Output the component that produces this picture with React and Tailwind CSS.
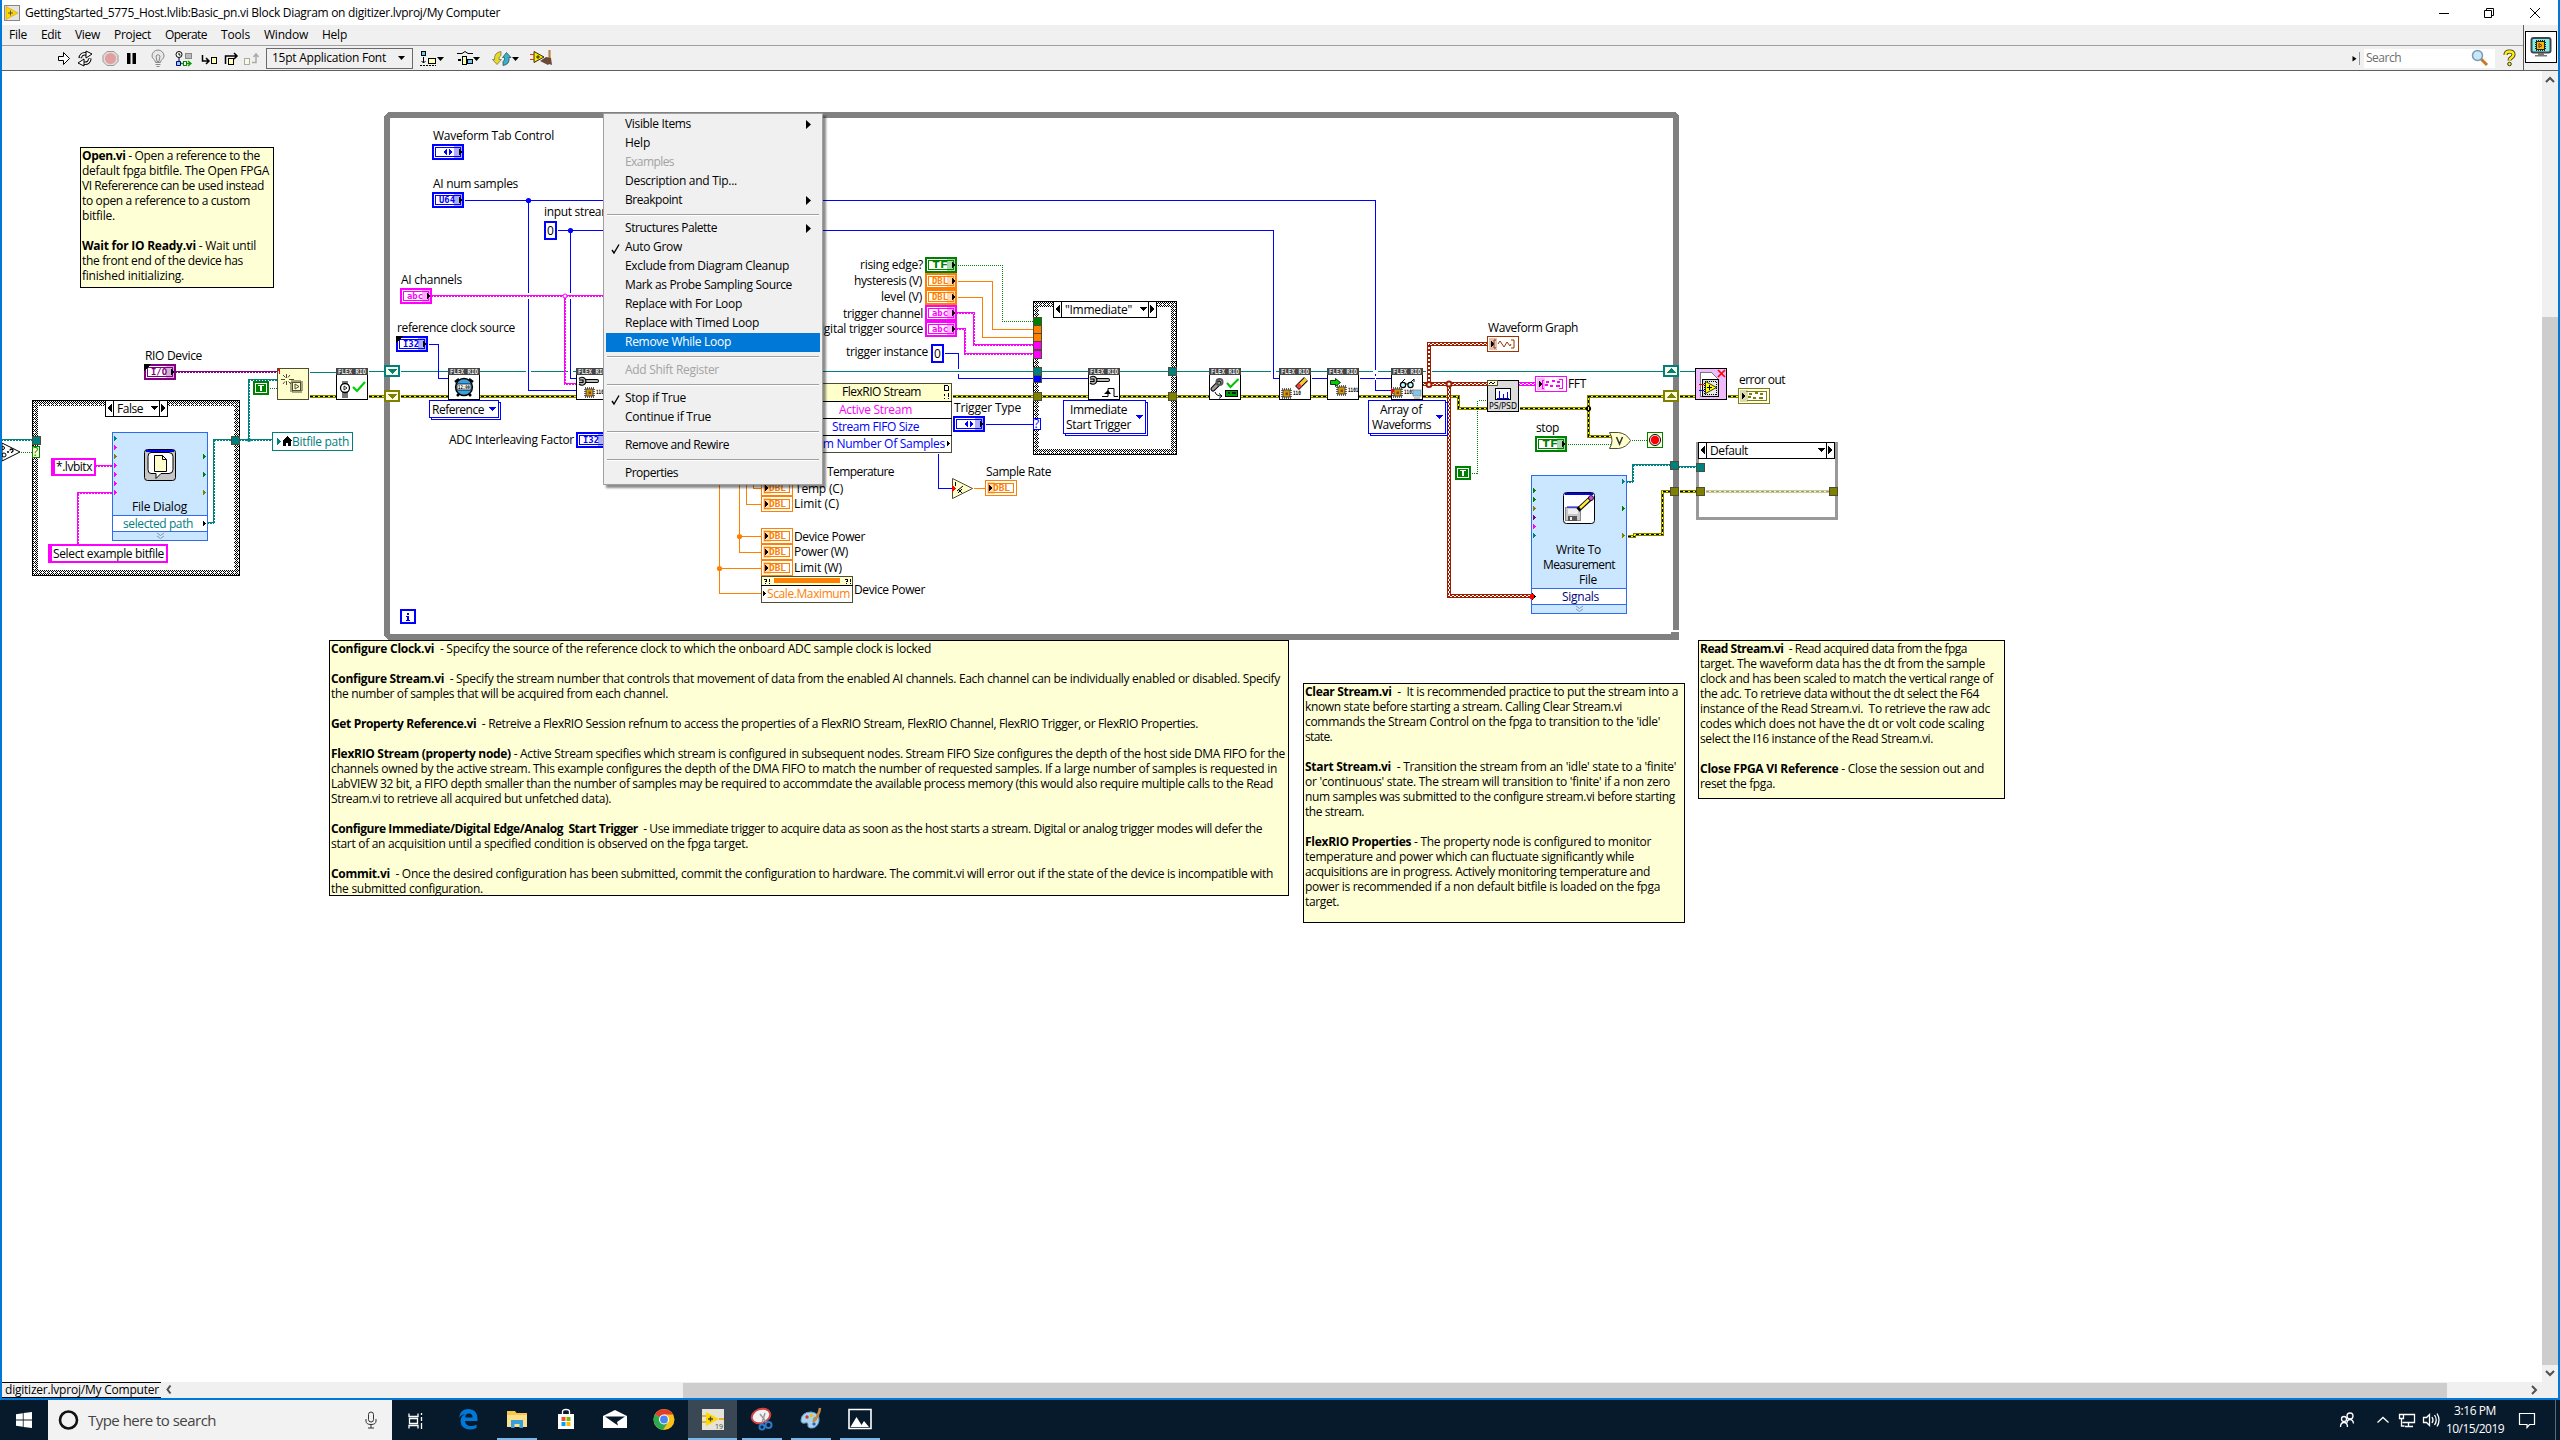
import React, { useLayoutEffect, useRef } from "react";

/* ---------- text helpers ---------- */

// Tracks the letters so that the run of text spans exactly `w` pixels.
function Fit({ w, className = "", children }) {
  const ref = useRef(null);
  useLayoutEffect(() => {
    const el = ref.current;
    el.style.letterSpacing = "0px";
    const natural = el.getBoundingClientRect().width;
    const n = el.textContent.length || 1;
    el.style.letterSpacing = (w - natural) / n + "px";
  }, [w]);
  return (
    <span ref={ref} className={"inline-block whitespace-pre " + className}>
      {children}
    </span>
  );
}

// Diagram label: x = left edge, y = baseline, w = width.
function Label({ x, y, w, c = "text-black", children }) {
  return (
    <div className={"absolute h-4 leading-4 " + c} style={{ left: x, top: y - 12 }}>
      <Fit w={w}>{children}</Fit>
    </div>
  );
}

/* ---------- wires ---------- */

const BLUE = "#0000ff";
const PINK = "#ff00ff";
const TEAL = "#008080";
const ORANGE = "#ff8000";
const GREEN = "#008000";
const OLIVE = "#808000";
const BROWN = "#9c1c00";
const PURPLE = "#800080";

function Wire({ p, c }) {
  return <polyline points={p} fill="none" stroke={c} strokeWidth="1" transform="translate(.5 .5)" />;
}
function Dotted({ p }) {
  return <polyline points={p} fill="none" stroke={GREEN} strokeWidth="1" strokeDasharray="1 1" transform="translate(.5 .5)" />;
}
function Wavy({ p, c }) {
  return (
    <g fill="none">
      <polyline points={p} stroke={c} strokeWidth="2" />
      <polyline points={p} stroke="#fff" strokeWidth="1" strokeDasharray="1 2" transform="translate(.5 .5)" />
    </g>
  );
}
function ErrWire({ p, o = 1 }) {
  return (
    <g fill="none" transform="translate(.5 .5)" opacity={o}>
      <polyline points={p} stroke={OLIVE} strokeWidth="3" />
      <polyline points={p} stroke="#ffff00" strokeWidth="1" />
      <polyline points={p} stroke="#000" strokeWidth="1" strokeDasharray="3 2" />
    </g>
  );
}
function Braid({ p, c = BROWN }) {
  return (
    <g fill="none">
      <polyline points={p} stroke={c} strokeWidth="4" />
      <polyline points={p} stroke="#fff" strokeWidth="1" strokeDasharray="2 2" transform="translate(.5 .5)" />
      <polyline points={p} stroke="#fff" strokeWidth="1" strokeDasharray="2 2" strokeDashoffset="1" transform="translate(-.5 -.5)" />
    </g>
  );
}
function Dot({ x, y, c }) {
  return <circle cx={x + 0.5} cy={y + 0.5} r="2.6" fill={c} shapeRendering="auto" />;
}
function Tri({ x, y, c = "#000" }) {
  return <path d={`M${x} ${y - 3.5}v7l3-3.5z`} fill={c} />;
}

/* ---------- terminals and nodes ---------- */

function Tiny({ x, y, w, c = "#000", s = 7, children }) {
  return (
    <text x={x} y={y} textLength={w} lengthAdjust="spacingAndGlyphs" fontSize={s} fontWeight="bold" fill={c} fontFamily="'DejaVu Sans Mono', monospace">
      {children}
    </text>
  );
}

function Control({ x, y, c, t, corner }) {
  return (
    <g>
      <rect x={x + 1} y={y + 1} width="30" height="14" fill="#fff" stroke={c} strokeWidth="2" />
      <rect x={x + 3.5} y={y + 3.5} width="25" height="9" fill="#fff" stroke={c} />
      {t === "ring" ? (
        <path d={`M${x + 15} ${y + 5}v6l-4-3zM${x + 17} ${y + 5}v6l4-3z`} fill={c} />
      ) : (
        <Tiny x={x + 7} y={y + 11} w={16} c={c} s={8}>{t}</Tiny>
      )}
      <rect x={x + 22} y={y + 2} width="8" height="12" fill={c} opacity=".32" />
      <Tri x={x + 27} y={y + 8} />
      {corner && <path d={`M${x} ${y}h7l-7 7z`} fill="#000" />}
    </g>
  );
}

function Indicator({ x, y, c, t }) {
  return (
    <g>
      <rect x={x + 0.5} y={y + 0.5} width="31" height="15" fill="#fff" stroke={c} />
      {t === "DBL" && <rect x={x + 3.5} y={y + 3.5} width="25" height="9" fill="#fff" stroke={c} />}
      <rect x={x + 2} y={y + 2} width="8" height="12" fill={c} opacity=".3" />
      <Tri x={x + 4} y={y + 8} />
      {t === "DBL" && <Tiny x={x + 8} y={y + 11} w={17} c={c} s={8}>DBL</Tiny>}
      {t === "wave" && <path d={`M${x + 9} ${y + 4}h-2v8h2M${x + 24} ${y + 4}h3v8h-3M${x + 11} ${y + 8}l2-3 4 6 3-5 3 4 1-2`} fill="none" stroke={c} shapeRendering="auto" />}
      {(t === "array" || t === "cluster") && (
        <g>
          {t === "array" && <path d={`M${x + 9} ${y + 4}h-2v8h2M${x + 24} ${y + 3}h3v9h-3`} fill="none" stroke={c} />}
          {t === "cluster" && <path d={`M${x + 8} ${y + 3.5}h20.500v9h-20`} fill="none" stroke={c} />}
          <path d={`M${x + 11} ${y + 5.5}h3M${x + 17} ${y + 5}h3M${x + 10} ${y + 9}h3M${x + 15} ${y + 10}h3M${x + 21} ${y + 10}h4M${x + 22} ${y + 6}h3`} stroke={c} strokeWidth="2" />
        </g>
      )}
    </g>
  );
}

function NumConst({ x, y }) {
  return <rect x={x + 1} y={y + 1} width="11" height="17" fill="#fff" stroke={BLUE} strokeWidth="2" />;
}

function TrueConst({ x, y }) {
  return (
    <g>
      <rect x={x + 1} y={y + 1} width="14" height="12" fill="#fff" stroke={GREEN} strokeWidth="2" />
      <rect x={x + 3} y={y + 3} width="10" height="8" fill={GREEN} />
      <path d={`M${x + 5} ${y + 4.5}h6M${x + 8} ${y + 4}v6`} stroke="#fff" strokeWidth="1.500" />
    </g>
  );
}

function Tunnel({ x, y, c, h = 9 }) {
  return <rect x={x + 0.5} y={y + 0.5} width="8" height={h - 1} fill={c} stroke="#4d4d33" />;
}

function CaseFrame({ x, y, w, h }) {
  return (
    <g>
      <rect x={x} y={y} width={w} height={h} fill="url(#mesh)" />
      <rect x={x + 0.5} y={y + 0.5} width={w - 1} height={h - 1} fill="none" stroke="#000" />
      <rect x={x + 6} y={y + 6} width={w - 12} height={h - 12} fill="#fff" />
    </g>
  );
}

function Selector({ x, y, w }) {
  return (
    <g>
      <rect x={x + 0.5} y={y + 0.5} width={w - 1} height="16" fill="#fff" stroke="#000" />
      <path d={`M${x + 8.5} ${y}v17M${x + w - 8.5} ${y}v17`} stroke="#000" />
      <path d={`M${x + 7} ${y + 4}v8l-5-4zM${x + w - 7} ${y + 4}v8l5-4zM${x + w - 18} ${y + 6}h8l-4 4z`} fill="#000" />
    </g>
  );
}

function PolySelector({ x, y, w, h }) {
  return (
    <g>
      <rect x={x + 2.5} y={y + 2.5} width={w - 1} height={h - 1} fill="#fff" stroke={BLUE} />
      <rect x={x + 0.5} y={y + 0.5} width={w - 1} height={h - 1} fill="#fff" stroke={BLUE} />
      <path d={`M${x + w - 11} ${y + h / 2 - 2}h8l-4 4z`} fill={BLUE} />
    </g>
  );
}

function FlexNode({ x, children }) {
  return (
    <g>
      <rect x={x + 0.5} y="368.5" width="31" height="31" fill="#fff" stroke="#000" />
      <rect x={x} y="368" width="32" height="7" fill="#454545" />
      <Tiny x={x + 2} y={374} w={28} c="#e8e8e8" s={7}>FLEX RIO</Tiny>
      <g transform={`translate(${x} 368)`} shapeRendering="auto">{children}</g>
    </g>
  );
}

function Chip({ x, y, label = "110" }) {
  return (
    <g>
      <rect x={x} y={y} width="9" height="9" fill="none" stroke="#333" strokeWidth="1.500" strokeDasharray="1 1" />
      <rect x={x + 1} y={y + 1} width="7" height="7" fill="#d8960c" stroke="#333" strokeWidth=".8" />
      <rect x={x + 3.5} y={y + 3.5} width="2.500" height="2.500" fill="#7a4a00" />
      <Tiny x={x + 11} y={y + 6} w={label.length * 2.6} s={6}>{label}</Tiny>
    </g>
  );
}

function Wrench({ x, y }) {
  return (
    <g>
      <path d={`M${x + 6} ${y + 4}h12`} stroke="#000" strokeWidth="4" strokeLinecap="round" />
      <path d={`M${x + 6} ${y + 4}h12`} stroke="#bbb" strokeWidth="2" strokeLinecap="round" />
      <path d={`M${x} ${y + 1.5}a4 4 0 1 1 0 5.500M${x} ${y + 3}h4v2.500h-4`} fill="#bbb" stroke="#000" strokeWidth="1.200" />
    </g>
  );
}

function ShiftReg({ x, y, c, up }) {
  return (
    <g>
      <rect x={x + 1} y={y + 1} width="14" height="10" fill="#fffde0" stroke={c} strokeWidth="2" />
      <path d={up ? `M${x + 3} ${y + 8}h10l-5-5z` : `M${x + 3} ${y + 4}h10l-5 5z`} fill={c} />
    </g>
  );
}

function Express({ x, y, w, h, line }) {
  return (
    <g>
      <rect x={x + 0.5} y={y + 0.5} width={w - 1} height={h - 1} fill="#cbe6ff" stroke="#2e6bf5" />
      <rect x={x + 0.5} y={line + 0.5} width={w - 1} height="16" fill="#fff" stroke="#2e6bf5" />
      <path d={`M${x + 45} ${line + 18}l3.500 2.500 3.500-2.500M${x + 45} ${line + 21}l3.500 2.500 3.500-2.500`} fill="none" stroke="#8896aa" shapeRendering="auto" />
    </g>
  );
}

function Diagram() {
  return (
    <svg className="absolute left-0 top-0" width="2540" height="1380" viewBox="0 0 2540 1380" shapeRendering="crispEdges">
      <defs>
        <pattern id="mesh" width="4" height="4" patternUnits="userSpaceOnUse">
          <rect width="4" height="4" fill="#fff" />
          <path d="M0 0h1v1h-1zM1 1h1v1h-1zM2 2h1v1h-1zM3 3h1v1h-1zM3 1h1v1h-1zM1 3h1v1h-1zM0 2h1v1h-1z" fill="#000" />
        </pattern>
      </defs>

      {/* while loop frame */}
      <path d="M388 112H1675L1679 116V630H1673V118H390V634H1671V632H1679V640H388L384 636V116Z" fill="#808080" />
      <rect x="401" y="610" width="14" height="13" fill="#fff" stroke={BLUE} strokeWidth="2" />
      <path d="M407 613h2v2h-2zM406 616h3v4h1v1h-4v-1h1v-3h-1z" fill={BLUE} />

      {/* structures */}
      <CaseFrame x={32} y={400} w={208} h={176} />
      <Selector x={105} y={400} w={63} />
      <CaseFrame x={1033} y={301} w={144} h={154} />
      <Selector x={1053} y={301} w={104} />
      <rect x="1697.5" y="443.500" width="139" height="75" fill="#fff" stroke="#999" strokeWidth="3" />
      <Selector x={1698} y={442} w={137} />

      {/* session reference wires */}
      <Wire c={TEAL} p="309,372 336,372" />
      <Wire c={TEAL} p="368,371 384,371" />
      <Wire c={TEAL} p="400,371 1663,371" />
      <Wire c={TEAL} p="1679,371 1695,371" />
      <path d="M526 371.500h5M568 371.500h5M1271 371.500h5M1373 371.500h5M1426 371.500h6" stroke="#fff" strokeWidth="2" />

      {/* error wires */}
      <ErrWire p="309,396 336,396" />
      <ErrWire p="368,396 384,396" />
      <ErrWire p="400,396 790,396" />
      <ErrWire p="952,396 1458,396 1458,408 1487,408" />
      <ErrWire p="1519,408 1588,408 1588,396 1663,396" />
      <ErrWire p="1588,408 1588,436 1612,436" />
      <ErrWire p="1679,396 1695,396" />
      <ErrWire p="1727,396 1738,396" />
      <ErrWire p="1627,536 1634,536 1634,534 1662,534 1662,491 1670,491" />
      <ErrWire p="1679,491 1696,491" />
      <ErrWire p="1705,491 1829,491" o={0.4} />
      <Dot x={1588} y={408} c="#000" />
      <path d="M1588 407h1v3h-1z" fill="#ff0" />

      {/* integer wires */}
      <Wire c={BLUE} p="464,200 1375,200 1375,390 1391,390" />
      <Wire c={BLUE} p="557,230 1273,230 1273,378 1279,378" />
      <Wire c={BLUE} p="528,200 528,390 576,390" />
      <Wire c={BLUE} p="570,230 570,378 576,378" />
      <Dot x={528} y={200} c={BLUE} />
      <Dot x={570} y={230} c={BLUE} />
      <Wire c={BLUE} p="428,344 438,344 438,378 448,378" />
      <Wire c={BLUE} p="944,353 958,353 958,378 1088,378" />
      <Wire c={BLUE} p="985,424 1033,424" />
      <Wire c={BLUE} p="938,453 938,488 952,488" />
      <Wire c={BLUE} p="1311,378 1327,378" />
      <Wire c={BLUE} p="1359,378 1391,378" />
      <path d="M528.5 293v6M570.5 293v6M1375.5 370v4M1375.5 376v4M958.5 369v5" stroke="#fff" />
      <Wire c={TEAL} p="950,371 966,371" />

      {/* string and path wires */}
      <Wavy c={PINK} p="432,296 603,296" />
      <Wavy c={PINK} p="565,296 565,384 576,384" />
      <circle cx="565" cy="296" r="2" fill="#fff" stroke={PINK} shapeRendering="auto" />
      <Wavy c={PINK} p="957,313 974,313 974,345 1033,345" />
      <Wavy c={PINK} p="957,329 965,329 965,354 1033,354" />
      <Wavy c={PINK} p="96,466 113,466" />
      <Wavy c={PINK} p="78,544 78,493 113,493" />
      <Wavy c={TEAL} p="2,440 32,440" />
      <Wavy c={TEAL} p="208,523 214,523 214,440 231,440" />
      <Wavy c={TEAL} p="240,440 272,440" />
      <Wavy c={TEAL} p="249,440 249,380 277,380" />
      <circle cx="249" cy="440" r="2" fill={TEAL} shapeRendering="auto" />
      <Wavy c={TEAL} p="1627,482 1633,482 1633,465 1670,465" />
      <Wavy c={TEAL} p="1679,467 1696,467" />
      <Wavy c={PURPLE} p="176,372 277,372" />

      {/* boolean wires */}
      <Dotted p="20,452 32,452" />
      <Dotted p="269,388 277,388" />
      <Dotted p="957,265 1002,265 1002,321 1033,321" />
      <Dotted p="1471,473 1477,473 1477,400 1487,400" />
      <Dotted p="1567,444 1612,444" />
      <Dotted p="1631,440 1647,440" />

      {/* floating point wires */}
      <Wire c={ORANGE} p="957,281 992,281 992,329 1033,329" />
      <Wire c={ORANGE} p="957,297 982,297 982,337 1033,337" />
      <Wire c={ORANGE} p="973,488 985,488" />
      <Wire c={ORANGE} p="719,470 719,593 762,593" />
      <Wire c={ORANGE} p="719,568 761,568" />
      <Wire c={ORANGE} p="739,470 739,552 761,552" />
      <Wire c={ORANGE} p="739,536 761,536" />
      <Wire c={ORANGE} p="746,470 746,504 761,504" />
      <Wire c={ORANGE} p="753,470 753,488 761,488" />
      <Dot x={719} y={568} c={ORANGE} />
      <Dot x={739} y={536} c={ORANGE} />

      {/* waveform wires */}
      <Braid p="1423,384 1487,384" />
      <Braid p="1429,384 1429,344 1487,344" />
      <Braid p="1449,384 1449,596 1532,596" />
      <Braid c={PINK} p="1519,384 1535,384" />
      <circle cx="1429" cy="384.500" r="2.500" fill="#fff" stroke={BROWN} strokeWidth="2" shapeRendering="auto" />
      <circle cx="1449" cy="384" r="2.500" fill="#fff" stroke={BROWN} strokeWidth="2" shapeRendering="auto" />

      {/* tunnels */}
      <Tunnel x={32} y={436} c={TEAL} />
      <Tunnel x={231} y={436} c={TEAL} />
      <rect x="32.5" y="446.500" width="7" height="11" fill="#ffffcc" stroke={GREEN} />
      <Tunnel x={1033} y={317} c={GREEN} />
      <Tunnel x={1033} y={325} c={ORANGE} />
      <Tunnel x={1033} y={333} c={ORANGE} />
      <Tunnel x={1033} y={341} c={PINK} />
      <Tunnel x={1033} y={350} c={PINK} />
      <Tunnel x={1033} y={367} c={TEAL} />
      <Tunnel x={1033} y={375} c={BLUE} h={8} />
      <Tunnel x={1033} y={392} c={OLIVE} />
      <rect x="1033.5" y="418.500" width="7" height="11" fill="#fff" stroke={BLUE} />
      <Tunnel x={1168} y={367} c={TEAL} />
      <Tunnel x={1168} y={392} c={OLIVE} />
      <Tunnel x={1670} y={461} c={TEAL} />
      <Tunnel x={1670} y={487} c={OLIVE} />
      <Tunnel x={1696} y={463} c={TEAL} />
      <Tunnel x={1696} y={487} c={OLIVE} />
      <Tunnel x={1829} y={487} c={OLIVE} />
      <ShiftReg x={384} y={365} c={TEAL} />
      <ShiftReg x={384} y={390} c={OLIVE} />
      <ShiftReg x={1663} y={365} c={TEAL} up />
      <ShiftReg x={1663} y={390} c={OLIVE} up />

      {/* empty-path test at the left edge */}
      <g shapeRendering="auto">
        <path d="M2 443l18 9-18 9z" fill="#fff" stroke="#000" />
        <circle cx="3" cy="448" r="1.500" fill="none" stroke="#000" />
        <circle cx="4" cy="455" r="2" fill="none" stroke="#000" />
        <path d="M7 452h2M10 450.500c0-2 3-2 3 0 0 1.500-1.500 1-1.500 2.500" fill="none" stroke="#000" strokeWidth="1.300" />
      </g>

      {/* file dialog */}
      <rect x="52.5" y="458.500" width="42" height="16" fill="#fff" stroke={PINK} strokeWidth="2" />
      <rect x="51" y="457.500" width="4" height="18" fill={PINK} />
      <rect x="49" y="545" width="118" height="17" fill="#fff" stroke={PINK} strokeWidth="2" />
      <rect x="48" y="544" width="4" height="19" fill={PINK} />
      <Express x={112} y={432} w={96} h={109} line={515} />
      {[[438, TEAL], [447, PINK], [456, OLIVE], [465, PINK], [474, PINK], [483, PINK], [492, PINK]].map(([y, c]) => (
        <Tri key={y} x={114} y={y + 0.5} c={c} />
      ))}
      <Tri x={203} y={456.5} c={GREEN} />
      <Tri x={203} y={474.5} c={GREEN} />
      <Tri x={203} y={492.5} c={OLIVE} />
      <Tri x={203} y={523.5} />
      <g shapeRendering="auto">
        <rect x="144.5" y="449.500" width="31" height="31" rx="3" fill="#c6c6c6" stroke="#000" />
        <rect x="146" y="450" width="28" height="2" fill="#00f" />
        <path d="M151 452.500h18q4 0 4 4v13q0 4-4 4h-8l-5 5v-5h-5q-3 0-3-4v-13q0-4 3-4z" fill="#fff" stroke="#000" />
        <path d="M154.500 455.500h8l4 4v12h-12z" fill="#ffffcc" stroke="#000" />
        <path d="M162.500 455.500v4h4" fill="none" stroke="#000" />
      </g>
      <rect x="272.5" y="432.500" width="80" height="18" fill="#fff" stroke={TEAL} />
      <path d="M277 437v9l4-4.500z" fill={TEAL} />
      <path d="M287 436l5 5h-1v5h-3v-3h-2v3h-3v-5h-1z" fill="#000" />

      {/* session open */}
      <Control x={144} y={364} c={PURPLE} t="I/O" corner />
      <TrueConst x={253} y={381} />
      <rect x="277.5" y="368.500" width="31" height="31" fill="#ffffcc" stroke="#4d4d33" />
      <path d="M278 369h2v6z" fill="#f00" />
      <g stroke="#4d4d33" fill="none" shapeRendering="auto">
        <path d="M286.500 374v4M286.500 381v4M281 379.500h4M289 379.500h5M283 375l2.500 2.500M290 375l-2 2.500M283 384l2-2.500M291 384l-2.500-2.500" />
        <rect x="291.5" y="381.500" width="10" height="10" strokeWidth="3" strokeDasharray="1 1" />
        <rect x="292.5" y="382.500" width="8" height="8" fill="#ffffcc" />
        <path d="M295 384v5l4-2.500z" />
      </g>
      <FlexNode x={336}>
        <path d="M6 13h6v17h-6z" fill="#777" />
        <circle cx="9" cy="20" r="4.500" fill="#fff" stroke="#000" strokeWidth="1.300" />
        <path d="M8 18v4l3-2z" fill="none" stroke="#000" strokeWidth=".8" />
        <path d="M17 19l4 4 8-9" fill="none" stroke="#00d000" strokeWidth="2.200" />
      </FlexNode>

      {/* front panel terminals */}
      <Control x={432} y={144} c={BLUE} t="ring" />
      <Control x={432} y={192} c={BLUE} t="U64" />
      <NumConst x={544} y={221} />
      <Control x={400} y={288} c={PINK} t="abc" />
      <Control x={396} y={336} c={BLUE} t="I32" corner />
      <Control x={576} y={432} c={BLUE} t="I32" />
      <Control x={925} y={257} c={GREEN} t="TF" />
      <Control x={925} y={273} c={ORANGE} t="DBL" />
      <Control x={925} y={289} c={ORANGE} t="DBL" />
      <Control x={925} y={305} c={PINK} t="abc" />
      <Control x={925} y={321} c={PINK} t="abc" />
      <NumConst x={931} y={344} />
      <Control x={953} y={416} c={BLUE} t="ring" />
      <Control x={1535} y={436} c={GREEN} t="TF" />
      {[480, 496, 528, 544, 560].map((y) => (
        <Indicator key={y} x={761} y={y} c={ORANGE} t="DBL" />
      ))}
      <Indicator x={985} y={480} c={ORANGE} t="DBL" />
      <Indicator x={1487} y={336} c="#993300" t="wave" />
      <Indicator x={1535} y={376} c={PINK} t="array" />
      <Indicator x={1738} y={388} c={OLIVE} t="cluster" />

      {/* configuration nodes */}
      <FlexNode x={448}>
        <path d="M7 14l4-3M25 14l-4-3M9 28l3-3M23 28l-3-3" stroke="#000" strokeWidth="2.500" />
        <circle cx="16" cy="19" r="8.500" fill="#3aa0e0" stroke="#000" strokeWidth="1.300" />
        <rect x="9" y="16" width="14" height="6" fill="#fff" stroke="#000" strokeWidth=".8" />
        <Tiny x={10} y={21} w={12} s={5}>12:00</Tiny>
      </FlexNode>
      <PolySelector x={429} y={400} w={70} h={18} />
      <FlexNode x={576}>
        <Wrench x={3} y={9} />
        <Chip x={9} y={20} />
      </FlexNode>
      <FlexNode x={1088}>
        <Wrench x={2} y={8} />
        <path d="M14 28.500h6v-8h6v8h4" fill="none" stroke="#000" />
        <path d="M16 26l4-4 3 4z" fill="#000" />
      </FlexNode>
      <PolySelector x={1063} y={400} w={83} h={34} />
      <FlexNode x={1209}>
        <path d="M4 21l6-6" stroke="#000" strokeWidth="5" strokeLinecap="round" />
        <path d="M4 21l6-6" stroke="#999" strokeWidth="3" strokeLinecap="round" />
        <circle cx="10.5" cy="14" r="3" fill="none" stroke="#555" strokeWidth="2" />
        <path d="M18 15l3.500 4 8-8" fill="none" stroke="#00c000" strokeWidth="2" />
        <path d="M6 24q1 4 7 4M10 25.500l3 2.500-3 2.500" fill="none" stroke="#000" />
        <rect x="16.500" y="22.500" width="12" height="6" fill="#00a000" stroke="#000" />
        <path d="M19 25h2M23 25h4" stroke="#023" strokeWidth="2" />
      </FlexNode>
      <FlexNode x={1279}>
        <path d="M18 20l9-9" stroke="#000" strokeWidth="5.500" />
        <path d="M20 18l7-7" stroke="#ffc830" strokeWidth="3.500" />
        <path d="M18.500 19.500l3-3" stroke="#f04040" strokeWidth="4" />
        <Chip x={3} y={21} />
      </FlexNode>
      <FlexNode x={1327}>
        <path d="M3.500 12.500h5v-2l5 4-5 4v-2h-5z" fill="#00d000" stroke="#000" strokeWidth=".8" />
        <Chip x={10} y={18} label="1101" />
      </FlexNode>
      <FlexNode x={1391}>
        <circle cx="12" cy="17" r="2.600" fill="#bff" stroke="#000" strokeWidth="1.200" />
        <circle cx="19.500" cy="17" r="2.600" fill="#bff" stroke="#000" strokeWidth="1.200" />
        <path d="M10 15l4-4M20 14l3-3v3M15 16h2" fill="none" stroke="#000" />
        <Chip x={2} y={20} label="1101" />
        <rect x="22" y="22" width="8" height="6" fill="#7ec8ee" stroke="#888" strokeWidth=".8" />
        <path d="M23 30h6" stroke="#888" />
      </FlexNode>
      <path d="M1391 388v6l4-3z" fill="#f00" />
      <PolySelector x={1368} y={400} w={78} h={34} />

      {/* stream property node */}
      <rect x="790.5" y="383.500" width="161" height="69" fill="#fff" stroke="#4d4d33" />
      <rect x="791" y="384" width="160" height="17" fill="#ffffcc" />
      <path d="M790 401.500h162M790 418.500h162M790 435.500h162" stroke="#000" />
      <path d="M944.500 385.500h3l1 1v4h-4zM944.500 394v2M948.500 393v4M948.500 398v1M944.500 398v1" fill="#fff" stroke="#000" />
      <Tri x={947} y={443.5} />

      {/* reciprocal */}
      <path d="M952.500 478.500l20 10-20 10z" fill="#ffffcc" stroke="#4d4d33" shapeRendering="auto" />
      <path d="M952 485v7l4-3.500z" fill="#f00" />
      <path d="M955.500 482v4M957 491l6-5M958 489l4 4M962 489l-4 4" stroke="#000" shapeRendering="auto" />

      {/* scale property node */}
      <rect x="761.5" y="576.500" width="91" height="26" fill="#fff" stroke="#4d4d33" />
      <rect x="762" y="577" width="90" height="8" fill="#ffffcc" />
      <path d="M761 585.500h92" stroke="#000" />
      <rect x="774" y="578" width="66" height="5" fill={ORANGE} />
      <path d="M764 579.500h2v1.500h-1M765.500 582.500v1M769 578.500v3.500M769 583v1M845 579.500h2v1.500h-1M846.500 582.500v1M850 578.500v3.500M850 583v1" fill="none" stroke="#000" />
      <Tri x={763} y={593.5} />

      {/* spectrum node */}
      <rect x="1487.5" y="380.500" width="31" height="31" fill="#dcdcdc" stroke="#000" />
      <rect x="1487.5" y="380.500" width="10" height="5" fill="#ffffcc" stroke="#4d4d33" />
      <path d="M1489 383.500l2-1 2 1 2-1" fill="none" stroke="#000" />
      <rect x="1495.5" y="388.500" width="15" height="11" fill="#fff" stroke="#000" />
      <path d="M1497 398.500h12M1499.500 391v7M1503.500 394v4M1507.500 392v6" stroke="#00f" />
      <text x="1489" y="409" textLength="28" lengthAdjust="spacingAndGlyphs" fontSize="8" fontFamily="'DejaVu Sans', sans-serif">PS/PSD</text>
      <TrueConst x={1455} y={466} />

      {/* stop logic */}
      <path d="M1609.500 432.500h9q8 1 12 8-4 7-12 8h-9q5-8 0-16z" fill="#ffffcc" stroke="#4d4d33" shapeRendering="auto" />
      <path d="M1616.500 437l3 7 3-7" fill="none" stroke="#333" strokeWidth="1.500" shapeRendering="auto" />
      <rect x="1647.5" y="432.500" width="15" height="15" fill="#fffde0" stroke={GREEN} />
      <circle cx="1655" cy="440" r="5.500" fill="#fff" stroke="#000" shapeRendering="auto" />
      <circle cx="1655" cy="440" r="4.200" fill="#f00" shapeRendering="auto" />

      {/* close reference */}
      <rect x="1695.5" y="368.500" width="31" height="31" fill="#eebbff" stroke="#000" />
      <path d="M1700.500 372.500h11l6 6v18h-17z" fill="#fff" stroke="#777" />
      <path d="M1718 370l7 7M1725 370l-7 7" stroke="#f00" strokeWidth="1.600" shapeRendering="auto" />
      <rect x="1702.5" y="379.500" width="16" height="17" fill="#ddd" stroke="#000" />
      <rect x="1704.5" y="381.500" width="12" height="13" fill="#e8e8e8" stroke="#000" strokeDasharray="1 1" />
      <path d="M1705.500 381.500v12l11-6z" fill="#ffff00" stroke="#000" strokeWidth=".8" shapeRendering="auto" />
      <path d="M1707 387.500h5M1709.500 385v5" stroke="#000" />
      <path d="M1699 384.500h5" stroke="#f00" />
      <path d="M1699 390.500h5" stroke="#00f" />

      {/* write to measurement file */}
      <Express x={1531} y={475} w={96} h={139} line={588} />
      {[[490, GREEN], [499, GREEN], [508, OLIVE], [517, PURPLE], [526, PINK], [535, TEAL]].map(([y, c]) => (
        <Tri key={y} x={1533} y={y + 0.5} c={c} />
      ))}
      <Tri x={1622} y={481.5} c={TEAL} />
      <Tri x={1622} y={508.5} c={GREEN} />
      <Tri x={1622} y={535.5} c={OLIVE} />
      <path d="M1532 593l4 3.500-4 3.500z" fill="#000" />
      <circle cx="1532" cy="596.500" r="2.500" fill="#f00" />
      <g shapeRendering="auto">
        <rect x="1563.5" y="492.500" width="31" height="31" rx="3" fill="#fff" stroke="#000" />
        <rect x="1565" y="493" width="28" height="2" fill="#00f" />
        <rect x="1565.5" y="507.500" width="15" height="13" fill="#c8c8c8" stroke="#888" />
        <path d="M1567 507h12" stroke="#00f" />
        <rect x="1568" y="509" width="10" height="5" fill="#eee" />
        <rect x="1568" y="516" width="9" height="5" fill="#555" />
        <rect x="1570" y="517" width="2" height="3" fill="#eee" />
        <path d="M1578 510l13-12" stroke="#000" strokeWidth="4.500" />
        <path d="M1580 508l9-8.500" stroke="#ffee33" strokeWidth="2.500" />
        <circle cx="1591" cy="498" r="2.500" fill="#d050d0" stroke="#000" strokeWidth=".8" />
      </g>
    </svg>
  );
}

/* ---------- labels of the diagram ---------- */

const LABELS = [
  [433, 140, 121, "Waveform Tab Control"],
  [433, 188, 85, "AI num samples"],
  [544, 216, 68, "input stream"],
  [401, 284, 61, "AI channels"],
  [397, 332, 118, "reference clock source"],
  [449, 444, 125, "ADC Interleaving Factor"],
  [432, 414, 52, "Reference"],
  [547, 235, 7, "0"],
  [145, 360, 57, "RIO Device"],
  [117, 413, 26, "False"],
  [33, 456, 6, "?", "text-[#008000]"],
  [56, 471, 36, "*.lvbitx"],
  [53, 558, 111, "Select example bitfile"],
  [132, 511, 55, "File Dialog"],
  [123, 528, 70, "selected path", "text-[#008080]"],
  [292, 446, 57, "Bitfile path", "text-[#008080]"],
  [860, 269, 63, "rising edge?"],
  [854, 285, 68, "hysteresis (V)"],
  [881, 301, 41, "level (V)"],
  [843, 318, 80, "trigger channel"],
  [814, 333, 109, "digital trigger source"],
  [846, 356, 82, "trigger instance"],
  [934, 358, 7, "0"],
  [1065, 314, 67, "\"Immediate\""],
  [1070, 414, 57, "Immediate"],
  [1066, 429, 65, "Start Trigger"],
  [1034, 428, 6, "?", "text-[#0000ff]"],
  [842, 396, 79, "FlexRIO Stream"],
  [839, 414, 73, "Active Stream", "text-[#ff00ff]"],
  [832, 431, 87, "Stream FIFO Size", "text-[#0000ff]"],
  [795, 448, 150, "Stream Number Of Samples", "text-[#0000ff]"],
  [954, 412, 67, "Trigger Type"],
  [827, 476, 67, "Temperature"],
  [986, 476, 65, "Sample Rate"],
  [795, 493, 48, "Temp (C)"],
  [794, 508, 45, "Limit (C)"],
  [794, 541, 71, "Device Power"],
  [794, 556, 54, "Power (W)"],
  [794, 572, 48, "Limit (W)"],
  [767, 598, 83, "Scale.Maximum", "text-[#ff8000]"],
  [854, 594, 71, "Device Power"],
  [1488, 332, 90, "Waveform Graph"],
  [1568, 388, 18, "FFT"],
  [1380, 414, 42, "Array of"],
  [1372, 429, 59, "Waveforms"],
  [1536, 432, 23, "stop"],
  [1739, 384, 46, "error out"],
  [1710, 455, 38, "Default"],
  [1556, 554, 45, "Write To"],
  [1543, 569, 72, "Measurement"],
  [1579, 584, 18, "File"],
  [1562, 601, 37, "Signals", "text-[#000080]"],
];

/* ---------- comment boxes: [width, bold part, rest] per line ---------- */

const COMMENTS = [
  {
    x: 80, y: 147, w: 194, h: 141,
    lines: [
      [178, "Open.vi", " - Open a reference to the"],
      [187, "", "default fpga bitfile. The Open FPGA"],
      [182, "", "VI Refererence can be used instead"],
      [168, "", "to open a reference to a custom"],
      [33, "", "bitfile."],
      null,
      [174, "Wait for IO Ready.vi", " - Wait until"],
      [161, "", "the front end of the device has"],
      [102, "", "finished initializing."],
    ],
  },
  {
    x: 329, y: 640, w: 960, h: 256,
    lines: [
      [600, "Configure Clock.vi", "  - Specifcy the source of the reference clock to which the onboard ADC sample clock is locked"],
      null,
      [949, "Configure Stream.vi", "  - Specify the stream number that controls that movement of data from the enabled AI channels. Each channel can be individually enabled or disabled. Specify"],
      [337, "", "the number of samples that will be acquired from each channel."],
      null,
      [867, "Get Property Reference.vi", "  - Retreive a FlexRIO Session refnum to access the properties of a FlexRIO Stream, FlexRIO Channel, FlexRIO Trigger, or FlexRIO Properties."],
      null,
      [954, "FlexRIO Stream (property node)", " - Active Stream specifies which stream is configured in subsequent nodes. Stream FIFO Size configures the depth of the host side DMA FIFO for the"],
      [946, "", "channels owned by the active stream. This example configures the depth of the DMA FIFO to match the number of requested samples. If a large number of samples is requested in"],
      [942, "", "LabVIEW 32 bit, a FIFO depth smaller than the number of samples may be required to accommdate the available process memory (this would also require multiple calls to the Read"],
      [280, "", "Stream.vi to retrieve all acquired but unfetched data)."],
      null,
      [931, "Configure Immediate/Digital Edge/Analog  Start Trigger", "  - Use immediate trigger to acquire data as soon as the host starts a stream. Digital or analog trigger modes will defer the"],
      [417, "", "start of an acquisition until a specified condition is observed on the fpga target."],
      null,
      [942, "Commit.vi", "  - Once the desired configuration has been submitted, commit the configuration to hardware. The commit.vi will error out if the state of the device is incompatible with"],
      [152, "", "the submitted configuration."],
    ],
  },
  {
    x: 1303, y: 683, w: 382, h: 240,
    lines: [
      [373, "Clear Stream.vi", "  -  It is recommended practice to put the stream into a"],
      [317, "", "known state before starting a stream. Calling Clear Stream.vi"],
      [355, "", "commands the Stream Control on the fpga to transition to the 'idle'"],
      [27, "", "state."],
      null,
      [371, "Start Stream.vi", "  - Transition the stream from an 'idle' state to a 'finite'"],
      [365, "", "or 'continuous' state. The stream will transition to 'finite' if a non zero"],
      [370, "", "num samples was submitted to the configure stream.vi before starting"],
      [59, "", "the stream."],
      null,
      [346, "FlexRIO Properties", " - The property node is configured to monitor"],
      [329, "", "temperature and power which can fluctuate significantly while"],
      [345, "", "acquisitions are in progress. Actively monitoring temperature and"],
      [355, "", "power is recommended if a non default bitfile is loaded on the fpga"],
      [34, "", "target."],
    ],
  },
  {
    x: 1698, y: 640, w: 307, h: 159,
    lines: [
      [267, "Read Stream.vi", "  - Read acquired data from the fpga"],
      [285, "", "target. The waveform data has the dt from the sample"],
      [293, "", "clock and has been scaled to match the vertical range of"],
      [279, "", "the adc. To retrieve data without the dt select the F64"],
      [290, "", "instance of the Read Stream.vi.  To retrieve the raw adc"],
      [284, "", "codes which does not have the dt or volt code scaling"],
      [233, "", "select the I16 instance of the Read Stream.vi."],
      null,
      [284, "Close FPGA VI Reference", " - Close the session out and"],
      [75, "", "reset the fpga."],
    ],
  },
];

function Comment({ x, y, w, h, lines }) {
  return (
    <div className="absolute border border-black bg-[#ffffd5] pl-px" style={{ left: x, top: y, width: w, height: h }}>
      {lines.map((l, i) => (
        <div key={i} className="h-[15px] leading-[15px]">
          {l && (
            <Fit w={l[0]}>
              {l[1] && <b className="font-bold">{l[1]}</b>}
              {l[2]}
            </Fit>
          )}
        </div>
      ))}
    </div>
  );
}

/* ---------- context menu ---------- */

const MENU = [
  ["Visible Items", 66, "sub"],
  ["Help", 25],
  ["Examples", 49, "off"],
  ["Description and Tip...", 112],
  ["Breakpoint", 57, "sub"],
  null,
  ["Structures Palette", 92, "sub"],
  ["Auto Grow", 57, "check"],
  ["Exclude from Diagram Cleanup", 164],
  ["Mark as Probe Sampling Source", 167],
  ["Replace with For Loop", 117],
  ["Replace with Timed Loop", 134],
  ["Remove While Loop", 106, "hot"],
  null,
  ["Add Shift Register", 94, "off"],
  null,
  ["Stop if True", 61, "check"],
  ["Continue if True", 86],
  null,
  ["Remove and Rewire", 104],
  null,
  ["Properties", 53],
];

function ContextMenu() {
  return (
    <div className="absolute left-[603px] top-[113px] flex h-[372px] w-[220px] flex-col border border-[#a0a0a0] bg-[#f0f0f0] px-[2px] pt-px shadow-[3px_3px_2px_rgba(0,0,0,0.45)]">
      {MENU.map((m, i) =>
        m === null ? (
          <div key={i} className="flex h-[9px] items-center px-px">
            <div className="h-[2px] w-full border-b border-white bg-[#a0a0a0]" />
          </div>
        ) : (
          <div
            key={i}
            className={
              "flex h-[19px] items-center pr-2 leading-[17px] " +
              (m[2] === "hot" ? "bg-[#0078d7] text-white" : m[2] === "off" ? "text-[#a3a3a3]" : "text-black")
            }
          >
            <div className="flex w-[19px] justify-center">
              {m[2] === "check" && (
                <svg width="9" height="10" viewBox="0 0 9 10" className="mt-0.5">
                  <path d="M1 6l2 3 5-8.500" fill="none" stroke="#000" strokeWidth="1.400" />
                </svg>
              )}
            </div>
            <Fit w={m[1]} className="pb-[2px]">{m[0]}</Fit>
            {m[2] === "sub" && (
              <svg width="6" height="9" viewBox="0 0 6 9" className="ml-auto">
                <path d="M0 0v9l5-4.500z" />
              </svg>
            )}
          </div>
        )
      )}
    </div>
  );
}

/* ---------- window chrome ---------- */

function TitleBar() {
  return (
    <div className="flex h-[25px] shrink-0 items-center bg-white pl-[2px] pr-[17px]">
      <svg width="16" height="16" viewBox="0 0 16 16" className="mr-[5px]">
        <rect x=".5" y=".5" width="15" height="15" fill="#e4e4e4" stroke="#888" />
        <path d="M2 1.500v13l12-6.500z" fill="#ffd800" stroke="#c89b00" strokeWidth=".6" />
        <path d="M4 8h5M6.500 5.500v5" stroke="#555" />
      </svg>
      <Fit w={475}>GettingStarted_5775_Host.lvlib:Basic_pn.vi Block Diagram on digitizer.lvproj/My Computer</Fit>
      <svg width="104" height="12" viewBox="0 0 104 12" className="ml-auto" fill="none" stroke="#000">
        <path d="M2 6.500h10M47.500 3.500h7v7h-7zM49.500 3.500v-2h7v7h-2M93 1l10 10M103 1l-10 10" />
      </svg>
    </div>
  );
}

const MENUBAR = [
  ["File", 18, "w-[32px]"],
  ["Edit", 20, "w-[34px]"],
  ["View", 25, "w-[39px]"],
  ["Project", 37, "w-[51px]"],
  ["Operate", 42, "w-[56px]"],
  ["Tools", 29, "w-[43px]"],
  ["Window", 44, "w-[58px]"],
  ["Help", 25, "w-[40px]"],
];

function ToolbarIcons() {
  return (
    <svg width="212" height="22" viewBox="54 47 212 22" className="shrink-0">
      <path d="M58.500 56.500h5v-4l6 6-6 6v-4h-5z" fill="#fff" stroke="#000" />
      <circle cx="85" cy="58.500" r="4.800" fill="none" stroke="#000" strokeWidth="3.600" strokeDasharray="11 4" />
      <circle cx="85" cy="58.500" r="4.800" fill="none" stroke="#fff" strokeWidth="1.600" strokeDasharray="10 5" strokeDashoffset="-.5" />
      <path d="M86 51l6 3-6 4zM84 66l-6-3 6-4z" fill="#fff" stroke="#000" />
      <path d="M107 51.500h7l4 4v6l-4 4h-7l-4-4v-6z" fill="#e4dada" stroke="#999" />
      <circle cx="110.500" cy="58.500" r="5.500" fill="#e0a0a0" />
      <path d="M127 53h3.500v11h-3.500zM132.500 53h3.500v11h-3.500z" fill="#000" />
      <path d="M152 56a6 6 0 1 1 12 0q0 2-2 3.500-1.500 1.500-1.500 3h-5q0-1.500-1.500-3-2-1.500-2-3.500z" fill="#e8e8e8" stroke="#888" />
      <path d="M155.500 64.500h5M156.500 66.500h3M156 56l2-1.500 2 1.500-1 5.500h-2z" fill="none" stroke="#888" />
      <circle cx="179" cy="54.500" r="3" fill="#fff" stroke="#000" />
      <path d="M179 53v2h1.500M179 58v4" fill="none" stroke="#000" />
      <rect x="185.500" y="53.500" width="6" height="5" fill="#bbb" stroke="#888" />
      <path d="M176.500 61.500h4v4h-4z" fill="#9cf" stroke="#008" />
      <path d="M181 63.500h9M188 61l3 2.500-3 2.500" fill="none" stroke="#090" strokeWidth="1.300" />
      <rect x="183.500" y="61.500" width="3" height="4" fill="#fff" stroke="#080" />
      <path d="M202.500 55v6h6M206 58l3 3-3 3" fill="none" stroke="#000" strokeWidth="1.500" />
      <rect x="211.500" y="57.500" width="5" height="6" fill="#ffffb0" stroke="#000" />
      <path d="M225.500 64v-8h11M234 53l3 3-3 3" fill="none" stroke="#000" strokeWidth="1.500" />
      <rect x="228.500" y="58.500" width="5" height="6" fill="#ffffb0" stroke="#000" />
      <rect x="244.500" y="58.500" width="5" height="6" fill="#fafae0" stroke="#aaa" />
      <path d="M252 62.500h4v-7M253.500 57l2.500-3 2.500 3" fill="none" stroke="#aaa" strokeWidth="1.500" />
    </svg>
  );
}

function ToolbarTools() {
  return (
    <svg width="140" height="22" viewBox="416 47 140 22">
      <g stroke="#000" fill="none">
        <rect x="421.500" y="51.500" width="4" height="4" fill="#6cf" />
        <path d="M423.500 57v6M421.500 61l2 2 2-2" />
        <path d="M420 65.500h16" strokeDasharray="2 1" />
        <rect x="428.500" y="58.500" width="7" height="5" fill="#ffffb0" />
        <path d="M457 53.500h5l3-2 3 2h5" />
        <path d="M458 60h3" strokeWidth="2" />
        <rect x="462.500" y="56.500" width="4" height="8" fill="#ffffb0" />
        <rect x="467.500" y="59.500" width="5" height="4" fill="#6cf" />
      </g>
      <path d="M437 57h7l-3.500 4zM473 57h7l-3.500 4zM512 57h7l-3.500 4z" />
      <path d="M501 51.500q-7 1-6.500 8h-2l4.500 5 4.500-5h-2.500q-.5-3 2-4z" fill="#e8d820" stroke="#665" strokeWidth=".7" />
      <path d="M503 65.500q7-1 6-8h2l-4.500-5-4 5h2q.5 3-1.500 4z" fill="#38b0c8" stroke="#245" strokeWidth=".7" />
      <path d="M534 51.500v11l10-5.500z" fill="#ffe800" stroke="#000" strokeWidth=".8" />
      <path d="M536 57h4M538 55v4" stroke="#000" strokeWidth=".8" />
      <path d="M530 54.500h4M530 59.500h4" stroke="#e30" />
      <path d="M549.500 50v9" stroke="#c08040" strokeWidth="2.200" />
      <path d="M546 57l5 1 1 7-3-1-1 1-8-4z" fill="#6a4a34" />
    </svg>
  );
}

function Bars() {
  return (
    <div className="flex h-[46px] shrink-0 border-b border-[#5f5f5f] bg-[#f0f0f0]">
      <div className="flex grow flex-col">
        <div className="flex h-[21px] items-center border-b border-[#a0a0a0] pl-[7px]">
          {MENUBAR.map(([t, w, cell]) => (
            <div key={t} className={cell}>
              <Fit w={w}>{t}</Fit>
            </div>
          ))}
        </div>
        <div className="flex h-6 items-center pl-[52px] pr-[7px]">
          <ToolbarIcons />
          <div className="flex h-[21px] w-[147px] items-center border border-[#6a6a6a] pl-[5px]">
            <Fit w={114}>15pt Application Font</Fit>
            <svg width="7" height="4" viewBox="0 0 7 4" className="ml-[12px]">
              <path d="M0 0h7l-3.500 4z" />
            </svg>
          </div>
          <div className="pl-[3px]">
            <ToolbarTools />
          </div>
          <svg width="10" height="13" viewBox="0 0 10 13" className="ml-auto mr-[3px]">
            <path d="M1.500 4v5.500l4-2.700z" />
            <path d="M8.500 0v13" stroke="#999" />
          </svg>
          <div className="flex h-[19px] w-[131px] items-center bg-white pl-[2px] pr-[6px] text-[#6d6d6d]">
            <Fit w={35}>Search</Fit>
            <svg width="18" height="18" viewBox="0 0 18 18" className="ml-auto">
              <path d="M10 10l6 6" stroke="#c87828" strokeWidth="3" />
              <circle cx="6.500" cy="6.500" r="5" fill="#c8e8fa" stroke="#7a9ab8" strokeWidth="1.500" />
            </svg>
          </div>
          <svg width="13" height="18" viewBox="0 0 13 18" className="ml-[8px]">
            <path d="M2.500 6q0-3.500 4-3.500t4 3q0 2-2.500 3.500-1.500 1-1.500 2.500" fill="none" stroke="#333" strokeWidth="4" />
            <path d="M2.500 6q0-3.500 4-3.500t4 3q0 2-2.500 3.500-1.500 1-1.500 2.500" fill="none" stroke="#ffee00" strokeWidth="2.400" />
            <circle cx="6.500" cy="15" r="1.800" fill="#ffee00" stroke="#333" />
          </svg>
        </div>
      </div>
      <div className="flex w-[35px] items-start justify-center border-l border-[#5f5f5f] pt-[6px]">
        <svg width="32" height="32" viewBox="0 0 32 32">
          <rect x=".5" y=".5" width="31" height="31" fill="#fff" stroke="#000" />
          <rect x="6.500" y="7" width="19" height="14.500" rx="2" fill="#7ff0f0" stroke="#444" strokeWidth="2" />
          <path d="M13 22h6v2h-6zM10 24h12v1.500h-12z" fill="#777" />
          <rect x="11" y="10" width="9" height="9" fill="#f8b800" stroke="#222" strokeWidth="2" strokeDasharray="1 1" />
          <rect x="11.500" y="10.500" width="8" height="8" fill="#f8b800" stroke="#222" />
          <path d="M14 12.500v4l3-2z" fill="none" stroke="#622" />
        </svg>
      </div>
    </div>
  );
}

function VScroll() {
  return (
    <div className="flex w-4 shrink-0 flex-col items-center bg-[#f0f0f0]">
      <svg width="16" height="17" viewBox="0 0 16 17">
        <path d="M4 11l4-4 4 4" fill="none" stroke="#505050" strokeWidth="2" />
      </svg>
      <div className="mt-[229px] h-[1048px] w-4 bg-[#cdcdcd]" />
      <svg width="16" height="17" viewBox="0 0 16 17" className="mt-auto">
        <path d="M4 6l4 4 4-4" fill="none" stroke="#505050" strokeWidth="2" />
      </svg>
    </div>
  );
}

function StatusRow() {
  return (
    <div className="flex h-4 shrink-0 items-center bg-[#f0f0f0]">
      <div className="h-4 w-[159px] border-y border-black pl-[3px] leading-[13px]">
        <Fit w={154}>digitizer.lvproj/My Computer</Fit>
      </div>
      <svg width="16" height="16" viewBox="0 0 16 16">
        <path d="M9.500 3.500l-3 4 3 4" fill="none" stroke="#505050" strokeWidth="2" />
      </svg>
      <div className="ml-[506px] h-[15px] w-[1764px] bg-[#cdcdcd]" />
      <svg width="16" height="16" viewBox="0 0 16 16" className="ml-[79px]">
        <path d="M6 4l4 4-4 4" fill="none" stroke="#505050" strokeWidth="2" />
      </svg>
    </div>
  );
}

/* ---------- taskbar ---------- */

function TaskButton({ on, active, children }) {
  return (
    <div className={"flex h-10 w-[49px] shrink-0 flex-col items-center " + (active ? "bg-[#3a4856]" : "")}>
      <div className="flex h-[38px] items-center">
        <svg width="24" height="24" viewBox="0 0 24 24">{children}</svg>
      </div>
      {on && <div className={"h-[2px] bg-[#76b9ed] " + (active ? "w-full" : "w-10")} />}
    </div>
  );
}

function Taskbar() {
  return (
    <div className="flex h-10 shrink-0 items-center bg-[#071a2b] text-white">
      <div className="flex w-12 justify-center">
        <svg width="16" height="16" viewBox="0 0 16 16" fill="#fff">
          <path d="M0 2.200l6.800-1v6.400H0zM7.600 1.100L16 0v7.600H7.600zM0 8.400h6.800v6.400l-6.800-1zM7.600 8.400H16V16l-8.400-1.100z" />
        </svg>
      </div>
      <div className="flex h-10 w-[344px] items-center bg-[#f2f2f2] pl-[10px] pr-[14px]">
        <svg width="21" height="22" viewBox="0 0 21 22">
          <circle cx="10.500" cy="11" r="8.500" fill="none" stroke="#111" strokeWidth="2.600" />
        </svg>
        <div className="ml-[9px] text-[15px] text-[#444]">
          <Fit w={128}>Type here to search</Fit>
        </div>
        <svg width="14" height="18" viewBox="0 0 14 18" className="ml-auto" fill="none" stroke="#333">
          <rect x="4.500" y="1" width="5" height="10" rx="2.500" />
          <path d="M2 8v2q0 3.500 5 3.500t5-3.500v-2M7 13.500v3.500M4 17h6" />
        </svg>
      </div>
      <div className="flex w-[49px] justify-center pr-px">
        <svg width="24" height="24" viewBox="0 0 24 24">
          <path d="M5 5.500v3h9v-3M5.500 10.500h8v5h-8zM5 20.500v-3h9v3M17.500 5v2M17.500 9v4M17.500 15v6" fill="none" stroke="#fff" strokeWidth="1.300" />
        </svg>
      </div>
      <div className="flex pl-[2px]">
        <TaskButton>
          <path d="M3 11Q4 2 12.500 2 21.500 2.500 21.500 12v2H9q.5 5 6 5 3 0 5.500-1.500V21q-3 1.500-7 1.500Q5 22 4.500 14q0-4.500 4.500-7Q5 7.500 3 11zM9 10.500h7.500q0-4-3.500-4t-4 4z" fill="#0078d7" />
        </TaskButton>
        <TaskButton on>
          <path d="M2 4h8l1.500 2H22v14H2z" fill="#f5c84c" />
          <path d="M2 8h20v12H2z" fill="#ffe08a" />
          <path d="M6 21v-8h12v8h-3.500v-4h-5v4z" fill="#3aa0dc" />
        </TaskButton>
        <TaskButton>
          <path d="M4 7h16v15H4z" fill="#fff" />
          <path d="M8.500 9V4.500q0-2 3.500-2t3.500 2V9" fill="none" stroke="#fff" strokeWidth="1.300" />
          <path d="M7.500 10h4v4h-4z" fill="#f25022" />
          <path d="M12.500 10h4v4h-4z" fill="#7fba00" />
          <path d="M7.500 15h4v4h-4z" fill="#00a4ef" />
          <path d="M12.500 15h4v4h-4z" fill="#ffb900" />
        </TaskButton>
        <TaskButton>
          <path d="M0 9l12-6 12 6v12H0z" fill="#fff" />
          <path d="M2 9.500h20l-8 5.500 1 3.500-4.500-3z" fill="#071a2b" />
        </TaskButton>
        <TaskButton>
          <circle cx="12" cy="12.500" r="10.500" fill="#fbc116" />
          <path d="M12 12.500L3 7.200A10.500 10.500 0 0 1 21.100 7.500H12z" fill="#e33b2e" />
          <path d="M3 7.200A10.500 10.500 0 0 0 11 23l5-8-4-2.500z" fill="#2da94f" />
          <circle cx="12" cy="12.500" r="5" fill="#fff" />
          <circle cx="12" cy="12.500" r="3.900" fill="#4a86f0" />
        </TaskButton>
        <TaskButton on active>
          <rect x="1" y="2" width="22" height="21" fill="#e6e3d8" />
          <path d="M5 5v14l13-7z" fill="#ffd800" />
          <path d="M1 9h4M1 15h4M18 12h5" stroke="#e8a000" strokeWidth="1.500" />
          <path d="M7 12h5M9.500 9.500v5" stroke="#444" strokeWidth="1.300" />
          <text x="14" y="22" fontSize="7" fill="#444" fontFamily="Open Sans, sans-serif">19</text>
        </TaskButton>
        <TaskButton on>
          <ellipse cx="11" cy="9" rx="9.500" ry="7" fill="#f2f2f2" stroke="#d04040" strokeWidth="2" transform="rotate(-20 11 9)" />
          <path d="M10 7l7 9M15 6l-3 10" stroke="#999" strokeWidth="1.500" />
          <circle cx="18.500" cy="18" r="3" fill="none" stroke="#2a7ad0" strokeWidth="2" />
          <circle cx="12" cy="20" r="2.500" fill="none" stroke="#2a7ad0" strokeWidth="2" />
        </TaskButton>
        <TaskButton on>
          <path d="M2 13q1-8 10-8 9 1 8 9-2 8-9 7-3-1-2-4 0-2-3-1-4 1-4-3z" fill="#a8d4ee" stroke="#6aa0c8" />
          <circle cx="8" cy="10" r="1.700" fill="#e03030" />
          <circle cx="12.500" cy="8.500" r="1.700" fill="#f0c020" />
          <circle cx="16" cy="12" r="1.700" fill="#30a040" />
          <circle cx="15" cy="17" r="1.700" fill="#3060d0" />
          <path d="M21 1q-1 8-7 14" fill="none" stroke="#c88a40" strokeWidth="2.500" />
        </TaskButton>
        <TaskButton on>
          <path d="M1 2.500h22v19H1z" fill="none" stroke="#fff" strokeWidth="1.600" />
          <path d="M2.500 20l6-10 5 8 2.500-4 5 6z" fill="#fff" />
        </TaskButton>
      </div>

      <div className="ml-auto flex items-center">
        <svg width="110" height="24" viewBox="2335 1408 110 24" fill="none" stroke="#fff" strokeWidth="1.300" className="shrink-0">
          <circle cx="2350" cy="1416" r="3" />
          <path d="M2347 1423q0-3.500 3-3.500t3.500 4" />
          <circle cx="2344" cy="1419" r="2.500" />
          <path d="M2340.500 1427q0-4.500 3.500-4.500t3.500 4.500M2377.500 1422.500l5.500-5 5.500 5M2403.500 1414.500h11v8h-12M2408.500 1423v3.500M2405 1426.500h8M2399.500 1414.500h4v4h-4zM2401.500 1419v7h3M2423.500 1417.500h3l3-3v11l-3-3h-3zM2432 1417q2 3 0 6M2434.500 1415q3.500 5 0 10M2437 1413.500q4 6.500 0 13" />
        </svg>
        <div className="flex w-[60px] flex-col items-center text-[12px] leading-[18px]">
          <Fit w={42}>3:16 PM</Fit>
          <Fit w={58}>10/15/2019</Fit>
        </div>
        <svg width="18" height="18" viewBox="0 0 18 18" fill="none" stroke="#fff" strokeWidth="1.200" className="ml-[13px]">
          <path d="M1.500 2.500h15v11h-5l-2.500 3v-3h-7.500z" />
        </svg>
        <div className="ml-[19px] mr-1 h-10 w-px bg-[#5c6873]" />
      </div>
    </div>
  );
}

export default function App() {
  return (
    <div className="flex h-[1440px] w-[2560px] flex-col overflow-hidden bg-white font-['Open_Sans','Noto_Sans',sans-serif] text-[12px] leading-4 text-black">
      <div className="flex h-[1400px] shrink-0 flex-col border-x-2 border-b-2 border-[#0078d7]">
        <TitleBar />
        <Bars />
        <div className="flex h-[1311px] shrink-0">
          <div className="relative grow overflow-hidden bg-white">
            <div className="absolute -left-[2px] -top-[71px] h-[1382px] w-[2542px]">
              <Diagram />
              {LABELS.map(([x, y, w, t, c]) => (
                <Label key={x + "-" + y} x={x} y={y} w={w} c={c}>{t}</Label>
              ))}
              {COMMENTS.map((c) => (
                <Comment key={c.x} {...c} />
              ))}
              <ContextMenu />
            </div>
          </div>
          <VScroll />
        </div>
        <StatusRow />
      </div>
      <Taskbar />
    </div>
  );
}
